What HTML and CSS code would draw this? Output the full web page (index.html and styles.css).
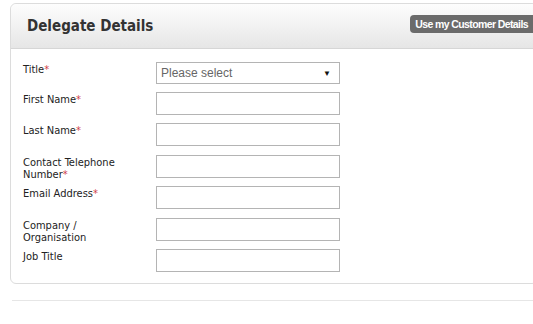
FILE: index.html
```html
<!DOCTYPE html>
<html lang="en">
<head>
  <meta charset="UTF-8" />
  <title>Delegate Details</title>
  <link rel="stylesheet" href="styles.css">
</head>
<body>
  <div class="panel">
    <div class="panel-head">
      <h2>Delegate Details</h2>
      <button class="copy-btn">Use my Customer Details</button>
    </div>
    <form class="delegate-form">
      <label class="field-label">Title<span class="req">*</span></label>
      <div class="select-box">
        <span class="placeholder">Please select</span>
        <span class="arrow">&#9660;</span>
      </div>

      <label class="field-label">First Name<span class="req">*</span></label>
      <input class="text-input" type="text" />

      <label class="field-label">Last Name<span class="req">*</span></label>
      <input class="text-input" type="text" />

      <label class="field-label">Contact Telephone Number<span class="req">*</span></label>
      <input class="text-input" type="text" />

      <label class="field-label">Email Address<span class="req">*</span></label>
      <input class="text-input" type="text" />

      <label class="field-label">Company / Organisation</label>
      <input class="text-input" type="text" />

      <label class="field-label">Job Title</label>
      <input class="text-input" type="text" />
    </form>
  </div>
  <div class="next-panel"></div>
</body>
</html>
```

FILE: styles.css
```css
html, body {
  overflow: hidden;
}
body {
  margin: 0;
  padding: 3px 0 0 10px;
  background: #fff;
  font-family: 'DejaVu Sans Condensed', 'DejaVu Sans', sans-serif;
  color: #222;
}
.panel {
  width: 526px;
  border: 1px solid #dcdcdc;
  border-radius: 6px;
  background: #fff;
}
.panel-head {
  height: 44px;
  display: flex;
  align-items: center;
  padding: 0 0 0 16px;
  background: linear-gradient(#fdfdfd, #e6e6e6);
  border-bottom: 1px solid #d6d6d6;
  border-radius: 6px 6px 0 0;
}
.panel-head h2 {
  margin: 0;
  font-size: 15px;
  font-weight: bold;
  color: #333;
  flex-grow: 1;
}
.copy-btn {
  height: 18px;
  margin-top: -4px;
  padding: 0 9px 0 5px;
  border: none;
  border-radius: 4px 0 0 4px;
  background: #6b6b6b;
  color: #fff;
  font-family: 'Liberation Sans', Arial, sans-serif;
  font-weight: bold;
  font-size: 10.5px;
  letter-spacing: -0.6px;
  white-space: nowrap;
}
.delegate-form {
  display: grid;
  grid-template-columns: 100px 184px;
  grid-template-rows: 21px;
  grid-auto-rows: 23px;
  column-gap: 33px;
  row-gap: 8.5px;
  padding: 13px 0 11px 12px;
}
.field-label {
  font-size: 11px;
  line-height: 12px;
  padding-top: 2px;
}
.req {
  color: #d0404a;
}
.text-input, .select-box {
  box-sizing: border-box;
  height: 23px;
  margin: 0;
  border: 1px solid #b4b4b4;
  background: #fff;
}
.select-box {
  height: 22px;
  display: flex;
  align-items: center;
  justify-content: space-between;
  padding: 0 8px 0 4px;
  font-family: 'Liberation Sans', Arial, sans-serif;
  font-size: 12px;
  color: #666;
}
.arrow {
  font-size: 8px;
  color: #111;
}
.next-panel {
  margin: 16px 0 0 2px;
  border-top: 1px solid #e6e6e6;
}
```
